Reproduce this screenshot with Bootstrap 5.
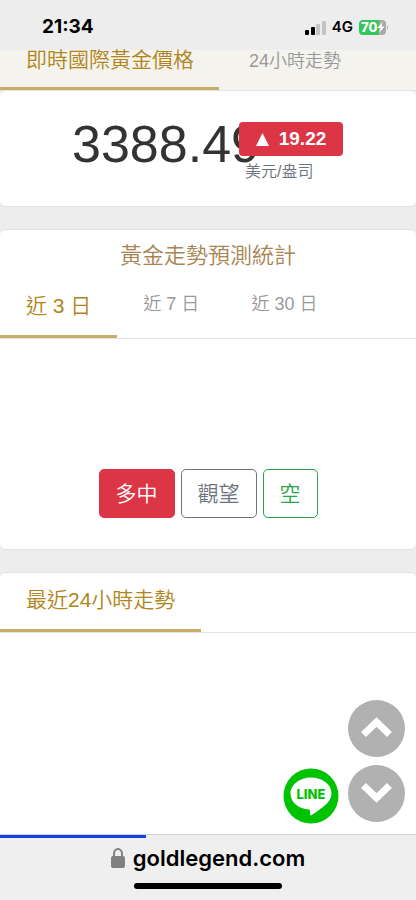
<!DOCTYPE html>
<html lang="zh-Hant">
<head>
<meta charset="utf-8">
<meta name="viewport" content="width=device-width, initial-scale=1">
<title>goldlegend.com</title>
<link href="https://cdn.jsdelivr.net/npm/bootstrap@5.3.0/dist/css/bootstrap.min.css" rel="stylesheet">
<style>
body { font-family: "Liberation Sans", "Noto Sans CJK TC", sans-serif; background: #ededed; color: #333; }
.ui-font { font-family: Inter, "Liberation Sans", sans-serif; color: #000; }
.status-bar { height: 50px; padding: 5px 28px 0 42px; background: #ededee; }
.status-icons { gap: 6px; }
.clock { font-size: 19px; font-weight: 700; }
.network { font-size: 15px; font-weight: 600; }
.panel { border: 1px solid #e2e2e2; border-width: 1px 0; border-radius: 6px; background: #fff; }
.tabs { border-bottom: 1px solid #e2e2e2; }
.tabs button { border: 0; background: none; padding: 0 26px; color: #999; font-size: 18px; font-weight: 350; line-height: 24px; border-bottom: 3px solid transparent; }
.tabs button.active { color: #b08519; font-size: 21px; border-color: #c8ad69; }
.top-tabs { background: #f4f3ee; }
.top-tabs button { height: 40px; padding-bottom: 16px; padding-left: 30px; line-height: 20px; }
.top-tabs button.active { padding: 0 25px 17px 26px; }
.mid-tabs button { height: 59px; padding-bottom: 2px; }
.day-tabs button { height: 66px; }
.day-tabs button.active { padding-top: 4px; }
.price-panel { height: 116px; padding: 23px 72px 0; }
.price { font-size: 52px; line-height: 60px; width: 167px; white-space: nowrap; }
.change { background: #dc3545; color: #fff; border-radius: 4px; width: 104px; height: 34px; margin-top: 8px; font-size: 19px; font-weight: 700; gap: 10px; }
.unit { color: #6c757d; font-size: 16px; line-height: 20px; font-weight: 350; padding: 6px 6px 0; }
.forecast-title { color: #a98452; font-size: 22px; line-height: 32px; font-weight: 350; padding-top: 10px; }
.forecast-body { padding: 130px 0 31px; gap: 6px; }
.forecast-body .btn { font-size: 21px; line-height: 28px; height: 49px; padding: 8px 16px; border-radius: 5px; font-weight: 350; }
.btn-outline-success { --bs-btn-color: #28a745; --bs-btn-border-color: #28a745; }
.block-gap { gap: 22px; }
.trend { min-height: 240px; border-bottom: 0; border-radius: 6px 6px 0 0; }
.floaters { right: 11px; bottom: 76px; gap: 9px; }
.floaters svg { display: block; }
.scroll-buttons { gap: 8px; padding-bottom: 2px; }
.address-bar { height: 66px; background: #efeff0; border-top: 1px solid #cfcfcf; }
.load-track { height: 3px; }
.load-value { height: 3px; width: 35%; background: #0a45e8; }
.address { font-size: 22px; line-height: 28px; font-weight: 600; margin-top: 6px; gap: 8px; }
.home-line { width: 148px; height: 6px; border-radius: 3px; background: #000; margin-top: 11px; }
</style>
<script src="https://cdn.jsdelivr.net/npm/bootstrap@5.3.0/dist/js/bootstrap.bundle.min.js"></script>
</head>
<body>
<div class="d-flex flex-column min-vh-100 position-relative">
  <header class="status-bar ui-font d-flex align-items-center justify-content-between">
    <span class="clock">21:34</span>
    <div class="status-icons d-flex align-items-center">
      <svg width="21" height="14" viewBox="0 0 21 14" aria-label="訊號">
        <rect x="0" y="9" width="4" height="5" rx="1"/><rect x="6" y="6" width="4" height="8" rx="1"/>
        <g fill="#c4c4c5"><rect x="11" y="3" width="4" height="11" rx="1"/><rect x="17" y="0" width="4" height="14" rx="1"/></g>
      </svg>
      <span class="network">4G</span>
      <svg width="29" height="15" viewBox="0 0 29 15" aria-label="電池 70%">
        <path d="M4 0H20V15H4A4 4 0 0 1 0 11V4A4 4 0 0 1 4 0" fill="#35c759"/>
        <path d="M20 0H23A4 4 0 0 1 27 4V11A4 4 0 0 1 23 15H20Z" fill="#a9a9aa"/>
        <path d="M28 5Q30 7.500 28 10Z" fill="#a9a9aa"/>
        <text x="2" y="12" font-size="13" font-weight="800" fill="#fff">70</text>
        <path d="M23.500 2L18.500 8H21.500L20 13L25.500 6.500H22.500Z" fill="#fff"/>
      </svg>
    </div>
  </header>

  <main class="flex-grow-1 d-flex flex-column block-gap">
    <section>
      <div class="tabs top-tabs d-flex" role="tablist">
        <button type="button" role="tab" class="active" aria-selected="true">即時國際黃金價格</button>
        <button type="button" role="tab" aria-selected="false">24小時走勢</button>
      </div>
      <div class="panel price-panel border-top-0 d-flex">
        <div class="price">3388.49</div>
        <div class="position-relative">
          <div class="change d-flex align-items-center justify-content-center">
            <svg width="13" height="13" viewBox="0 0 13 13" aria-hidden="true"><path d="M6.500 0L13 13H0Z" fill="#fff"/></svg>
            <span>19.22</span>
          </div>
          <div class="unit">美元/盎司</div>
        </div>
      </div>
    </section>

    <section class="panel">
      <h1 class="forecast-title text-center mb-0">黃金走勢預測統計</h1>
      <div class="tabs day-tabs d-flex" role="tablist">
        <button type="button" role="tab" class="active" aria-selected="true">近 3 日</button>
        <button type="button" role="tab" aria-selected="false">近 7 日</button>
        <button type="button" role="tab" aria-selected="false">近 30 日</button>
      </div>
      <div class="forecast-body d-flex justify-content-center">
        <button type="button" class="btn btn-danger">多中</button>
        <button type="button" class="btn btn-outline-secondary">觀望</button>
        <button type="button" class="btn btn-outline-success">空</button>
      </div>
    </section>

    <section class="panel trend flex-grow-1">
      <div class="tabs mid-tabs d-flex" role="tablist">
        <button type="button" role="tab" class="active" aria-selected="true">最近24小時走勢</button>
      </div>
    </section>
  </main>

  <div class="floaters position-absolute d-flex align-items-end">
    <a href="#line" aria-label="LINE">
      <svg width="56" height="56" viewBox="0 0 56 56">
        <circle cx="28" cy="28" r="27.500" fill="#00c300"/>
        <path d="M28 9.500C39 9.500 48.500 16 48.500 25C48.500 31 45 35 40 39C36 42 31 45.500 28 47.500C26.500 48 27.500 43 26.500 41.500C15 41 7.500 34 7.500 25.500C7.500 16.500 17 9.500 28 9.500Z" fill="#fff"/>
        <text x="28" y="31" text-anchor="middle" font-family="Inter, sans-serif" font-size="13" font-weight="800" fill="#00c300">LINE</text>
      </svg>
    </a>
    <div class="scroll-buttons d-flex flex-column">
      <button type="button" class="border-0 bg-transparent p-0" aria-label="回到頂部">
        <svg width="57" height="57" viewBox="0 0 57 57"><circle cx="28.500" cy="28.500" r="28.500" fill="#b1b1b1"/><path d="M15.500 34.500L28.500 22L41.500 34.500" fill="none" stroke="#fff" stroke-width="7"/></svg>
      </button>
      <button type="button" class="border-0 bg-transparent p-0" aria-label="前往底部">
        <svg width="57" height="57" viewBox="0 0 57 57"><circle cx="28.500" cy="28.500" r="28.500" fill="#b1b1b1"/><path d="M15.500 20.500L28.500 33L41.500 20.500" fill="none" stroke="#fff" stroke-width="7"/></svg>
      </button>
    </div>
  </div>

  <footer class="address-bar ui-font d-flex flex-column align-items-center">
    <div class="load-track w-100"><div class="load-value"></div></div>
    <div class="address d-flex align-items-center">
      <svg width="14" height="20" viewBox="0 0 14 20" aria-hidden="true"><rect y="8" width="14" height="12" rx="2" fill="#808083"/><path d="M3 9V5.500A4 4.500 0 0 1 11 5.500V9" fill="none" stroke="#808083" stroke-width="2"/></svg>
      <span>goldlegend.com</span>
    </div>
    <div class="home-line"></div>
  </footer>
</div>
</body>
</html>
